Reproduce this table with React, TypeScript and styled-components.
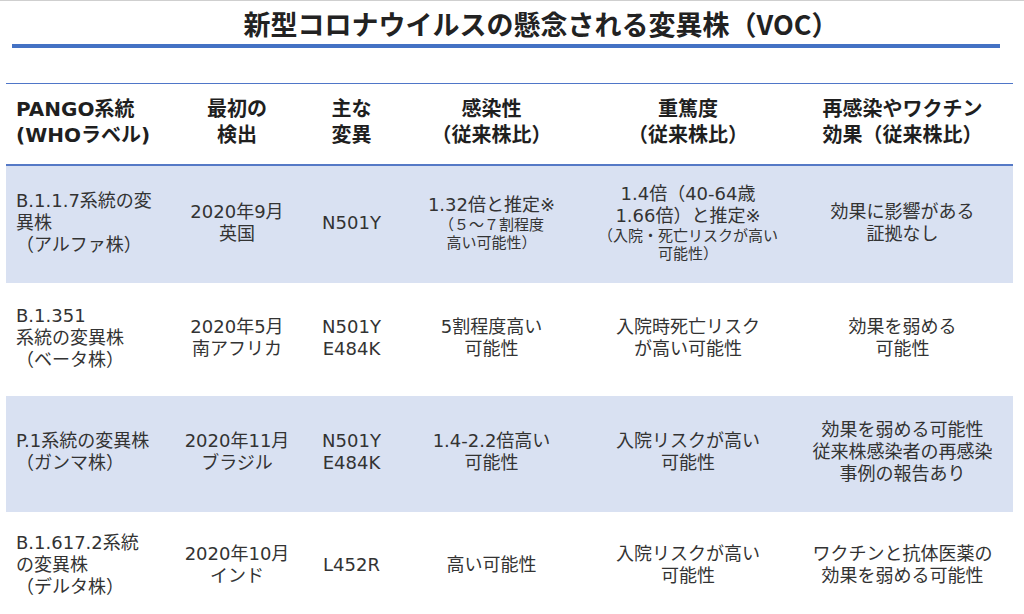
import React from "react";
import styled, { createGlobalStyle } from "styled-components";

const GlobalStyle = createGlobalStyle`
  html, body { margin: 0; padding: 0; background: #ffffff; }
  body { font-family: "DejaVu Sans", "Noto Sans CJK JP", sans-serif; }
  * { box-sizing: border-box; }
`;

const COLS = "170px 122px 107px 173px 220px 215px";

const Page = styled.div`
  width: 1024px;
  height: 614px;
  overflow: hidden;
  border-top: 1px solid #cfcfcf;
  background: #fff;
`;

const Title = styled.h1`
  margin: 0;
  padding: 7px 0 0 58px;
  text-align: center;
  font-family: "Noto Sans CJK JP", sans-serif;
  font-weight: 700;
  font-size: 27px;
  line-height: 31px;
  color: #222;
`;

const TitleBar = styled.div`
  margin: 5px 24px 0 12px;
  height: 4px;
  background: #4472c4;
`;

const Table = styled.div`
  margin: 35px 11px 0 6px;
  border-top: 1px solid #4f76c8;
`;

const Row = styled.div<{ $h: number; $shaded?: boolean; $head?: boolean }>`
  display: grid;
  grid-template-columns: ${COLS};
  height: ${(p) => p.$h}px;
  background: ${(p) => (p.$shaded ? "#d9e1f2" : "#ffffff")};
  border-bottom: ${(p) => (p.$head ? "2px solid #5579c6" : "none")};
`;

const Cell = styled.div<{ $left?: boolean; $head?: boolean; $pr?: number }>`
  display: flex;
  flex-direction: column;
  justify-content: center;
  align-items: ${(p) => (p.$left ? "flex-start" : "center")};
  text-align: ${(p) => (p.$left ? "left" : "center")};
  padding-left: ${(p) => (p.$left ? 10 : 0)}px;
  padding-right: ${(p) => p.$pr ?? 0}px;
  padding-bottom: 4px;
  white-space: nowrap;
  font-family: "DejaVu Sans", "Noto Sans CJK JP", sans-serif;
  font-weight: ${(p) => (p.$head ? 700 : 400)};
  font-size: ${(p) => (p.$head ? 20 : 18)}px;
  line-height: ${(p) => (p.$head ? 26 : 22)}px;
  color: ${(p) => (p.$head ? "#1f1f1f" : "#333")};
`;

const Line = styled.span<{ $small?: boolean }>`
  display: block;
  ${(p) => (p.$small ? "font-size: 15px; line-height: 18px;" : "")}
`;

type CellData = { lines: { t: string; small?: boolean }[] };

const L = (...items: (string | [string])[]): CellData => ({
  lines: items.map((i) => (Array.isArray(i) ? { t: i[0], small: true } : { t: i })),
});

const header = [
  L("PANGO系統", "(WHOラベル)"),
  L("最初の", "検出"),
  L("主な", "変異"),
  L("感染性", "（従来株比）"),
  L("重篤度", "（従来株比）"),
  L("再感染やワクチン", "効果（従来株比）"),
];

const rows: { h: number; shaded: boolean; cells: CellData[] }[] = [
  {
    h: 117,
    shaded: true,
    cells: [
      L("B.1.1.7系統の変", "異株", "（アルファ株）"),
      L("2020年9月", "英国"),
      L("N501Y"),
      L("1.32倍と推定※", ["（５～７割程度"], ["高い可能性）"]),
      L("1.4倍（40-64歳", "1.66倍）と推定※", ["（入院・死亡リスクが高い"], ["可能性）"]),
      L("効果に影響がある", "証拠なし"),
    ],
  },
  {
    h: 113,
    shaded: false,
    cells: [
      L("B.1.351", "系統の変異株", "（ベータ株）"),
      L("2020年5月", "南アフリカ"),
      L("N501Y", "E484K"),
      L("5割程度高い", "可能性"),
      L("入院時死亡リスク", "が高い可能性"),
      L("効果を弱める", "可能性"),
    ],
  },
  {
    h: 116,
    shaded: true,
    cells: [
      L("P.1系統の変異株", "（ガンマ株）"),
      L("2020年11月", "ブラジル"),
      L("N501Y", "E484K"),
      L("1.4-2.2倍高い", "可能性"),
      L("入院リスクが高い", "可能性"),
      L("効果を弱める可能性", "従来株感染者の再感染", "事例の報告あり"),
    ],
  },
  {
    h: 110,
    shaded: false,
    cells: [
      L("B.1.617.2系統", "の変異株", "（デルタ株）"),
      L("2020年10月", "インド"),
      L("L452R"),
      L("高い可能性"),
      L("入院リスクが高い", "可能性"),
      L("ワクチンと抗体医薬の", "効果を弱める可能性"),
    ],
  },
];

export default function App() {
  return (
    <>
      <GlobalStyle />
      <Page>
        <Title>新型コロナウイルスの懸念される変異株（VOC）</Title>
        <TitleBar />
        <Table>
          <Row $h={82} $head>
            {header.map((c, i) => (
              <Cell key={i} $head $left={i === 0} $pr={i === 5 ? 6 : 0}>
                {c.lines.map((l, j) => (
                  <Line key={j}>{l.t}</Line>
                ))}
              </Cell>
            ))}
          </Row>
          {rows.map((r, ri) => (
            <Row key={ri} $h={r.h} $shaded={r.shaded}>
              {r.cells.map((c, i) => (
                <Cell key={i} $left={i === 0} $pr={i === 5 ? 6 : 0}>
                  {c.lines.map((l, j) => (
                    <Line key={j} $small={l.small}>
                      {l.t}
                    </Line>
                  ))}
                </Cell>
              ))}
            </Row>
          ))}
        </Table>
      </Page>
    </>
  );
}
